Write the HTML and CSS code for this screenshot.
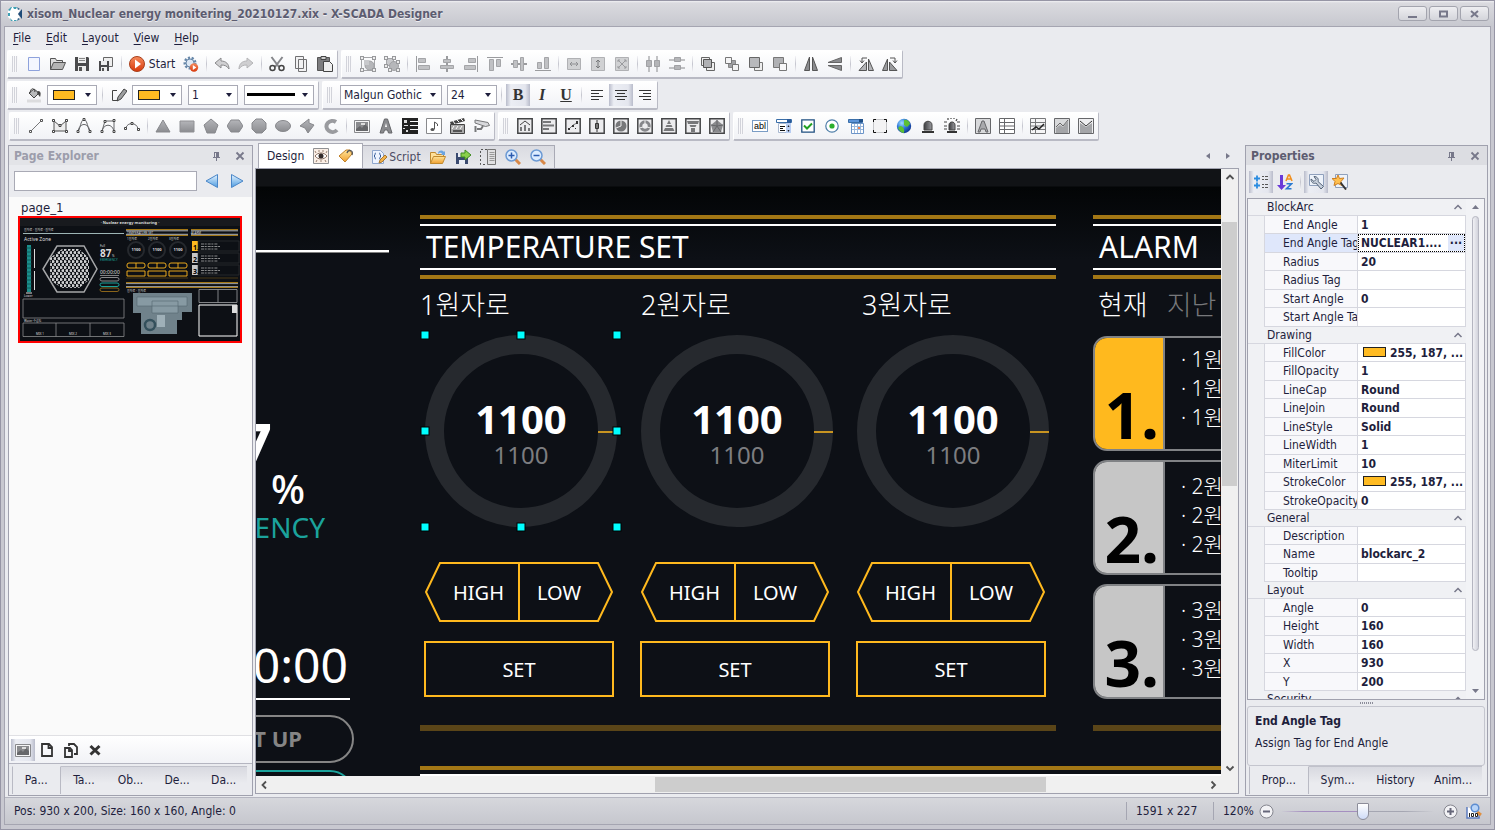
FILE: index.html
```
<!DOCTYPE html>
<html lang="en">
<head>
  <meta charset="UTF-8" />
  <meta name="viewport" content="width=device-width, initial-scale=1.0"/>
  <title>X-SCADA Designer</title>
  <link rel="stylesheet" href="styles.css">
</head>
<body>
  <!-- Icon sprite -->
  <svg class="sprite" width="0" height="0" aria-hidden="true">
    <defs>
      <linearGradient id="g-grey" x1="0" y1="0" x2="0" y2="1"><stop offset="0" stop-color="#b4b5b9"/><stop offset="1" stop-color="#8b8c90"/></linearGradient>
      <linearGradient id="g-blue" x1="0" y1="0" x2="0" y2="1"><stop offset="0" stop-color="#e6f4ff"/><stop offset="1" stop-color="#4d9be0"/></linearGradient>
      <linearGradient id="g-red" x1="0" y1="0" x2="0" y2="1"><stop offset="0" stop-color="#f58a5c"/><stop offset="1" stop-color="#d8390c"/></linearGradient>
      <linearGradient id="g-gold" x1="0" y1="0" x2="0" y2="1"><stop offset="0" stop-color="#ffe49a"/><stop offset="1" stop-color="#f0a030"/></linearGradient>
      <radialGradient id="g-globe" cx=".35" cy=".3" r=".8"><stop offset="0" stop-color="#9fe0ff"/><stop offset=".5" stop-color="#2a72d8"/><stop offset="1" stop-color="#0a2a80"/></radialGradient>
      <linearGradient id="g-line" x1="0" y1="0" x2="1" y2="0"><stop offset="0" stop-color="#3c3d40"/><stop offset="1" stop-color="#9a9b9f"/></linearGradient>
    </defs>
    <symbol id="i-logo" viewBox="0 0 16 16"><path d="M5 1h5l3 3-2 4 2 4-3 3H5l-4-4V5z" fill="#fff"/><path d="M1 4l3-3h1L3 5zM6 1h4l-1 2H7zM1 7h2v3H1zM3 12l3 3H4zM7 14h3l-1 1H7z" fill="#3fa0b4"/><path d="M15 3v10l-4-5z" fill="#1d4a78"/><path d="M10 1l3 2-2 1zM10 15l3-2-2-1z" fill="#2b5f86"/></symbol>
    <symbol id="i-new" viewBox="0 0 16 16"><path d="M2.500 1.500h11v13h-11z" fill="#f3f6ff" stroke="#8ea2dc"/></symbol>
    <symbol id="i-open" viewBox="0 0 16 16"><path d="M.5 13.500v-11h5l1 2h6v2" fill="#dedede" stroke="#555"/><path d="M.5 13.500l3-7h12l-3 7z" fill="#b5b5b5" stroke="#555"/></symbol>
    <symbol id="i-save" viewBox="0 0 16 16"><path d="M1 1h13l1 1v13H1z" fill="#4a4a4c"/><path d="M4 1h8v6H4zM4 10h8v5H4z" fill="#eee"/><path d="M5 2.500h6M5 4.500h6" stroke="#888"/><path d="M5 11h3v4H5z" fill="#555"/></symbol>
    <symbol id="i-saveall" viewBox="0 0 16 16"><path d="M5.500 1.500h9v9h-9z" fill="#eee" stroke="#666"/><path d="M1 5h10v10H1z" fill="#4a4a4c"/><path d="M3 5h6v4H3zM3 11h6v4H3z" fill="#eee"/><path d="M4 12h2v3H4z" fill="#555"/></symbol>
    <symbol id="i-start" viewBox="0 0 16 16"><circle cx="8" cy="8" r="7.500" fill="url(#g-red)" stroke="#a8401c"/><path d="M6 3.500l6 4.500-6 4.500z" fill="#fff"/></symbol>
    <symbol id="i-gear" viewBox="0 0 16 16"><circle cx="7" cy="7" r="5" fill="#dce8f4" stroke="#6787a8" stroke-width="3" stroke-dasharray="2 1.500"/><circle cx="7" cy="7" r="4" fill="#dce8f4" stroke="#6787a8"/><circle cx="11" cy="11.500" r="4.200" fill="url(#g-red)"/><path d="M9.800 9l3.500 2.500-3.500 2.500z" fill="#fff"/></symbol>
    <symbol id="i-undo" viewBox="0 0 16 16"><path d="M1 7l6-5v3c5 0 8 3 8 8-2-3-4-4-8-4v3z" fill="#d0d0d2" stroke="#8a8a8c"/></symbol>
    <symbol id="i-redo" viewBox="0 0 16 16"><path d="M15 7L9 2v3c-5 0-8 3-8 8 2-3 4-4 8-4v3z" fill="#cfcfd1" stroke="#b5b5b7"/></symbol>
    <symbol id="i-cut" viewBox="0 0 16 16"><path d="M2.500 1l7.500 10M13.500 1L6 11" stroke="#85868a" stroke-width="2"/><circle cx="3.500" cy="12" r="2.500" fill="none" stroke="#444" stroke-width="1.500"/><circle cx="12.500" cy="12" r="2.500" fill="none" stroke="#444" stroke-width="1.500"/></symbol>
    <symbol id="i-copy" viewBox="0 0 16 16"><path d="M2.500.5h8v12h-8zM5.500 3.500h8v12h-8z" fill="#f2f2f3" stroke="#707072"/></symbol>
    <symbol id="i-paste" viewBox="0 0 16 16"><path d="M.5 1.500h12v13H.5z" fill="#7d7d7f" stroke="#555"/><path d="M4 .5h5v3H4z" fill="#ccc" stroke="#444"/><path d="M6.500 5.500h6l3 3v7h-9z" fill="#eee" stroke="#444"/></symbol>
    <symbol id="i-group" viewBox="0 0 16 16"><path d="M1.500 1.500h13v13h-13z" fill="none" stroke="#a4a5a8"/><circle cx="9.500" cy="9.500" r="4.500" fill="#b6b7ba" stroke="#a0a1a4"/><path d="M4 4h5v5H4z" fill="#c8c9cc"/><path d="M0 0h4v4H0zM12 0h4v4h-4zM0 12h4v4H0zM12 12h4v4h-4z" fill="#98999c"/><path d="M1 1h2v2H1zM13 1h2v2h-2zM1 13h2v2H1zM13 13h2v2h-2z" fill="#eee"/></symbol>
    <symbol id="i-ungroup" viewBox="0 0 16 16"><path d="M2.500 2.500h7v7h-7z" fill="#c8c9cc" stroke="#a4a5a8"/><circle cx="10" cy="10" r="4.500" fill="#b6b7ba" stroke="#a0a1a4"/><path d="M0 0h4v4H0zM8 0h4v4H8zM0 8h4v4H0zM12 4h4v4h-4zM4 12h4v4H4zM12 12h4v4h-4z" fill="#98999c"/><path d="M1 1h2v2H1zM9 1h2v2H9zM1 9h2v2H1zM13 5h2v2h-2zM5 13h2v2H5zM13 13h2v2h-2z" fill="#eee"/></symbol>
    <symbol id="i-al" viewBox="0 0 16 16"><path d="M1.500 0v16" stroke="#9a9b9e"/><path d="M3.500 2.500h7v4h-7zM3.500 9.500h11v4h-11z" fill="#c0c1c4" stroke="#a4a5a8"/></symbol>
    <symbol id="i-ac" viewBox="0 0 16 16"><path d="M8 0v16" stroke="#9a9b9e" stroke-width="2"/><path d="M4.500 3.500h7v3h-7zM1.500 9.500h13v3h-13z" fill="#c0c1c4" stroke="#a4a5a8"/></symbol>
    <symbol id="i-ar" viewBox="0 0 16 16"><path d="M14.500 0v16" stroke="#9a9b9e"/><path d="M5.500 2.500h7v4h-7zM1.500 9.500h11v4h-11z" fill="#c0c1c4" stroke="#a4a5a8"/></symbol>
    <symbol id="i-at" viewBox="0 0 16 16"><path d="M0 1.500h16" stroke="#9a9b9e"/><path d="M2.500 3.500h4v11h-4zM9.500 3.500h4v7h-4z" fill="#c0c1c4" stroke="#a4a5a8"/></symbol>
    <symbol id="i-am" viewBox="0 0 16 16"><path d="M0 8h16" stroke="#9a9b9e" stroke-width="2"/><path d="M2.500 4.500h4v7h-4zM9.500 1.500h3v13h-3z" fill="#c0c1c4" stroke="#a4a5a8"/></symbol>
    <symbol id="i-ab" viewBox="0 0 16 16"><path d="M0 14.500h16" stroke="#9a9b9e"/><path d="M2.500 6.500h4v6h-4zM9.500 1.500h4v11h-4z" fill="#c0c1c4" stroke="#a4a5a8"/></symbol>
    <symbol id="i-sw" viewBox="0 0 16 16"><path d="M1.500 2.500h13v11h-13z" fill="#d0d1d3" stroke="#b0b1b4"/><path d="M4 8h8M6 6L4 8l2 2M10 6l2 2-2 2" fill="none" stroke="#8e8f92"/></symbol>
    <symbol id="i-sh" viewBox="0 0 16 16"><path d="M1.500 1.500h13v13h-13z" fill="#d0d1d3" stroke="#b0b1b4"/><path d="M8 4v8M6 6l2-2 2 2M6 10l2 2 2-2" fill="none" stroke="#77787a"/></symbol>
    <symbol id="i-sb" viewBox="0 0 16 16"><path d="M1.500 1.500h13v13h-13z" fill="#d0d1d3" stroke="#b0b1b4"/><path d="M4 4l8 8M12 4l-8 8M4 6V4h2M10 4h2v2M12 10v2h-2M6 12H4v-2" fill="none" stroke="#9a9b9e"/></symbol>
    <symbol id="i-dh" viewBox="0 0 16 16"><path d="M4 0v16M12 0v16" stroke="#88898c"/><path d="M1.500 4.500h5v6h-5zM9.500 4.500h5v6h-5z" fill="#b4b5b8" stroke="#a0a1a4"/></symbol>
    <symbol id="i-dv" viewBox="0 0 16 16"><path d="M0 4h16M0 12h16" stroke="#88898c"/><path d="M5.500 1.500h6v4h-6zM5.500 9.500h6v4h-6z" fill="#b4b5b8" stroke="#a0a1a4"/></symbol>
    <symbol id="i-z1" viewBox="0 0 16 16"><path d="M1.500 1.500h8v8h-8z" fill="#eee" stroke="#666"/><path d="M6.500 6.500h8v8h-8z" fill="#eee" stroke="#666"/><path d="M3.500 3.500h8v8h-8z" fill="#b0b1b4" stroke="#555"/></symbol>
    <symbol id="i-z2" viewBox="0 0 16 16"><path d="M4.500 4.500h7v7h-7z" fill="#a0a1a4" stroke="#888"/><path d="M1.500 1.500h6v6h-6zM8.500 8.500h6v6h-6z" fill="#f4f4f5" stroke="#777"/></symbol>
    <symbol id="i-z3" viewBox="0 0 16 16"><path d="M6.500 6.500h8v8h-8z" fill="#eee" stroke="#777"/><path d="M1.500 1.500h10v10h-10z" fill="#b8b9bc" stroke="#666"/></symbol>
    <symbol id="i-z4" viewBox="0 0 16 16"><path d="M1.500 1.500h10v10h-10z" fill="#b0b1b4" stroke="#777"/><path d="M7.500 7.500h7v7h-7z" fill="#f8f8f9" stroke="#777"/></symbol>
    <symbol id="i-fh" viewBox="0 0 16 16"><path d="M6.500 1v13.500h-5zM9.500 1v13.500h5z" fill="#8b8c8f" stroke="#555"/></symbol>
    <symbol id="i-fv" viewBox="0 0 16 16"><path d="M1 6.500h13.500v-5zM1 9.500h13.500v5z" fill="#8b8c8f" stroke="#666"/></symbol>
    <symbol id="i-rl" viewBox="0 0 16 16"><path d="M10.500 3v11.500h5zM1 14.500h7.500V6z" fill="#b4b5b8" stroke="#555"/><path d="M9 2H4v5M2 4.500L4 7l2-2.500" fill="none" stroke="#555"/></symbol>
    <symbol id="i-rr" viewBox="0 0 16 16"><path d="M5.500 3v11.500h-5zM7.500 6v8.500H15z" fill="#9a9b9e" stroke="#555"/><path d="M8 2h5v5M11 4.500L13 7l2-2.500" fill="none" stroke="#555"/></symbol>
    <symbol id="i-fill" viewBox="0 0 16 16"><path d="M3 6l5-4 5 4-5 5z" fill="#b8b9bb" stroke="#444"/><path d="M4 6c1-6 4-5 5-1" fill="none" stroke="#444"/><path d="M12 4c3 0 3 3 2 6l-3-4z" fill="#444"/><path d="M1 14h14" stroke="#dcdcde" stroke-width="3"/></symbol>
    <symbol id="i-pen" viewBox="0 0 16 16"><path d="M6 3.500H1.500v10H7" fill="none" stroke="#444"/><path d="M7 10l6-8 3 2-6 8-4 2z" fill="#9d9ea0" stroke="#444"/></symbol>
    <symbol id="i-left" viewBox="0 0 16 16"><path d="M2 3.500h12M2 6.500h8M2 9.500h12M2 12.500h8" stroke="#333"/></symbol>
    <symbol id="i-center" viewBox="0 0 16 16"><path d="M2 3.500h12M4 6.500h8M2 9.500h12M4 12.500h8" stroke="#333"/></symbol>
    <symbol id="i-right" viewBox="0 0 16 16"><path d="M2 3.500h12M6 6.500h8M2 9.500h12M6 12.500h8" stroke="#333"/></symbol>
    <symbol id="i-line" viewBox="0 0 16 16"><path d="M3 13L13 3" stroke="#77787a"/><path d="M1.500 12.500h2v2h-2zM12.500 1.500h2v2h-2z" fill="#fff" stroke="#555"/></symbol>
    <symbol id="i-poly" viewBox="0 0 16 16"><path d="M2 13V3l6 5 6-5v10z" fill="#eee" stroke="#555"/><path d="M.5 1.500h2v2h-2zM13.500 1.500h2v2h-2zM.5 12.500h2v2h-2zM13.500 12.500h2v2h-2zM7 6.500h2v2H7z" fill="#fff" stroke="#444"/></symbol>
    <symbol id="i-curve" viewBox="0 0 16 16"><path d="M2 14C3 4 13 4 14 14M3 12C5 6 5 3 8 1c3 2 3 5 5 11" fill="none" stroke="#66676a"/><path d="M1 12.500h2v2H1zM13 12.500h2v2h-2zM7 .5h2v2H7z" fill="#fff" stroke="#444"/></symbol>
    <symbol id="i-bezier" viewBox="0 0 16 16"><path d="M2 14C3 5 13 5 14 14M2 13l3-10h9v10" fill="none" stroke="#66676a"/><path d="M1 12.500h2v2H1zM13 12.500h2v2h-2zM4 2.500h2v2H4zM13 1.500h2v2h-2z" fill="#fff" stroke="#444"/></symbol>
    <symbol id="i-arcp" viewBox="0 0 16 16"><path d="M2 10C3 4 13 4 14 11" fill="none" stroke="#66676a"/><path d="M.5 9.500h2v2h-2zM13.500 10.500h2v2h-2zM7 4.500h2v2H7z" fill="#fff" stroke="#444"/></symbol>
    <symbol id="i-tri" viewBox="0 0 16 16"><path d="M8 2l7 12H1z" fill="url(#g-grey)" stroke="#87888c"/></symbol>
    <symbol id="i-rect" viewBox="0 0 16 16"><path d="M1 3h14v11H1z" fill="url(#g-grey)" stroke="#8f9094"/></symbol>
    <symbol id="i-penta" viewBox="0 0 16 16"><path d="M8 1l7 6-3 8H4L1 7z" fill="url(#g-grey)" stroke="#87888c"/></symbol>
    <symbol id="i-hexa" viewBox="0 0 16 16"><path d="M4 2h8l4 6-4 6H4L0 8z" fill="url(#g-grey)" stroke="#87888c"/></symbol>
    <symbol id="i-octa" viewBox="0 0 16 16"><path d="M5 1h6l4 4v6l-4 4H5l-4-4V5z" fill="url(#g-grey)" stroke="#87888c"/></symbol>
    <symbol id="i-ell" viewBox="0 0 16 16"><ellipse cx="8" cy="8" rx="7.500" ry="5.500" fill="url(#g-grey)" stroke="#87888c"/></symbol>
    <symbol id="i-pie" viewBox="0 0 16 16"><path d="M10 1v4l5 2-6 8-3-5-5-2z" fill="url(#g-grey)" stroke="#87888c"/></symbol>
    <symbol id="i-carc" viewBox="0 0 16 16"><path d="M13 4a6 5.500 0 1 0 1 8" fill="none" stroke="#9a9b9f" stroke-width="4"/></symbol>
    <symbol id="i-img" viewBox="0 0 16 16"><path d="M.5 2.500h15v12H.5z" fill="#f5f5f6" stroke="#88898c"/><path d="M2 4h12v9H2z" fill="#8a8b8e"/><path d="M2 11l4-3 2 2 3-4 3 3v4H2z" fill="#66676a"/><path d="M7 5h4v2H7z" fill="#ddd"/></symbol>
    <symbol id="i-a" viewBox="0 0 16 16"><path d="M2 15L6.500 1h3L14 15h-3.500l-1-3h-3l-1 3z" fill="#8a8b8e" stroke="#66676a"/><path d="M8 5l1 4H7z" fill="#fff"/></symbol>
    <symbol id="i-qr" viewBox="0 0 16 16"><path d="M0 0h8v16H0zM8 0h8v3H8zM8 4h8v3H8zM8 8h8v3H8zM8 12h8v4H8z" fill="#222"/><path d="M2 2h3v3H2zM2 7h4v1H2zM1 10h2v1H1zM4 12h2v2H4z" fill="#ddd"/></symbol>
    <symbol id="i-music" viewBox="0 0 16 16"><path d="M.5.5h15v15H.5z" fill="#fff" stroke="#88898c"/><ellipse cx="6.500" cy="11.500" rx="2" ry="1.500" fill="#555"/><path d="M8.500 11V4l3 2v2" fill="none" stroke="#555"/></symbol>
    <symbol id="i-clap" viewBox="0 0 16 16"><path d="M.5 6.500h14v9H.5z" fill="#aaa" stroke="#444"/><path d="M0 4l14-4 1 3-14 4z" fill="#444"/><path d="M3 3l2 3M7 2l2 2M11 1l2 2M4 8l-2 3M8 8l-2 3M12 8l-2 3" stroke="#fff"/><path d="M3 12h9v2H3z" fill="#555"/></symbol>
    <symbol id="i-cam" viewBox="0 0 16 16"><path d="M1 2l13 2.500 1.500 3-4 1L1 5z" fill="#d8d9dc" stroke="#77787a"/><path d="M9 8l-2 3H3M1.500 8v6" fill="none" stroke="#77787a" stroke-width="2"/></symbol>
    <symbol id="i-frame" viewBox="0 0 16 16"><path d="M.8.8h14.400v14.400H.8z" fill="#ececee" stroke="#444547" stroke-width="1.500"/></symbol>
    <symbol id="i-c1" viewBox="0 0 16 16"><use href="#i-frame"/><path d="M3 7l5-4 5 4" fill="none" stroke="#444"/><path d="M3 9h2v4H3zM7 7h2v6H7zM11 10h2v3h-2z" fill="#77787a"/></symbol>
    <symbol id="i-c2" viewBox="0 0 16 16"><use href="#i-frame"/><path d="M2 4h8M2 7.500h11M2 11h6" stroke="#77787a" stroke-width="2"/></symbol>
    <symbol id="i-c3" viewBox="0 0 16 16"><use href="#i-frame"/><path d="M4 11l4-4 4-2" fill="none" stroke="#77787a"/><path d="M3 10h2v2H3zM7 7h2v2H7zM11 3h2v3h-2zM10 10h1v1h-1z" fill="#333"/></symbol>
    <symbol id="i-c4" viewBox="0 0 16 16"><use href="#i-frame"/><path d="M8 2v12M6.500 5.500h3v5h-3z" fill="#bbb" stroke="#333"/></symbol>
    <symbol id="i-c5" viewBox="0 0 16 16"><use href="#i-frame"/><circle cx="8" cy="8" r="5.500" fill="#77787a"/><path d="M8 8V2M8 8l-5 2" stroke="#eee"/></symbol>
    <symbol id="i-c6" viewBox="0 0 16 16"><use href="#i-frame"/><circle cx="8" cy="8" r="4.200" fill="none" stroke="#85868a" stroke-width="3"/><path d="M8 2v4M2.500 10L6 9M13.500 10L10 9" stroke="#eee"/></symbol>
    <symbol id="i-c7" viewBox="0 0 16 16"><use href="#i-frame"/><path d="M8 2l2 4H6zM5.500 7h5l1 2h-7zM4 10h8l1.500 3h-11z" fill="#77787a"/></symbol>
    <symbol id="i-c8" viewBox="0 0 16 16"><use href="#i-frame"/><path d="M2 3h12l-1 3H3zM4.500 7h7l-1 2h-5zM6 10h4v4H6z" fill="#77787a"/></symbol>
    <symbol id="i-c9" viewBox="0 0 16 16"><use href="#i-frame"/><path d="M8 2l6 5-2 7H4L2 7z" fill="#8a8b8e"/><path d="M8 2v6l6-1M8 8l4 6M8 8l-4 6M8 8L2 7" fill="none" stroke="#66676a"/></symbol>
    <symbol id="i-drop" viewBox="0 0 16 16"><path d="M.5 1.500h15v3H.5z" fill="#fff" stroke="#3a6ea8"/><path d="M11 1h4v4h-4z" fill="#2a5a98"/><path d="M2.500 5.500h12v9h-12z" fill="#fff" stroke="#a8b8d0"/><path d="M10 5h5v10h-5z" fill="#b8cdf2"/><path d="M4 8.500h5M4 10.500h3M4 12.500h5" stroke="#111"/><path d="M12.500 7l1 2h-2zM12.500 14l1-2h-2z" fill="#222"/></symbol>
    <symbol id="i-check" viewBox="0 0 16 16"><path d="M1.800 1.800h12.400v12.400H1.800z" fill="#fff" stroke="#1f4f80" stroke-width="1.300"/><path d="M4 7.500l3 3 5-5" fill="none" stroke="#22a022" stroke-width="2"/></symbol>
    <symbol id="i-radio" viewBox="0 0 16 16"><circle cx="8" cy="8" r="6.200" fill="#fff" stroke="#4d7da8" stroke-width="1.200"/><circle cx="8" cy="8" r="2.600" fill="#2cae2c"/></symbol>
    <symbol id="i-cal" viewBox="0 0 16 16"><path d="M.5 1.500h14v3H.5z" fill="#5c93d8" stroke="#3a6ea8"/><path d="M11 1h4v3h-4z" fill="#1f4f88"/><path d="M3.500 5.500h12v10h-12z" fill="#fff" stroke="#6c94c8"/><path d="M4 8.500h11M4 11.500h11M6.500 6v9M9.500 6v9M12.500 6v9" stroke="#9cb8dc"/><path d="M10 9h2v2h-2z" fill="#f08050"/></symbol>
    <symbol id="i-panel" viewBox="0 0 16 16"><path d="M1.500 1.500h13v13h-13z" fill="#f3f3f4" stroke="#c4c5c8"/><path d="M1.500 4V1.500H4M12 1.500h2.500V4M14.500 12v2.500H12M4 14.500H1.500V12" fill="none" stroke="#111"/></symbol>
    <symbol id="i-globe" viewBox="0 0 16 16"><circle cx="8" cy="8" r="7.200" fill="url(#g-globe)"/><path d="M8 2c3-1 6 2 6 4l-3 3-3-2zM4 8c3 0 5 3 4 7-3 0-5-3-6-5z" fill="#5cc034"/></symbol>
    <symbol id="i-alarm" viewBox="0 0 16 16"><path d="M4 12V7c0-5 8-5 8 0v5z" fill="url(#g-line)" stroke="#444"/><path d="M2 13h12v2H2z" fill="#333"/></symbol>
    <symbol id="i-alarm2" viewBox="0 0 16 16"><path d="M5 12V7c0-4 6-4 6 0v5z" fill="url(#g-line)" stroke="#444"/><path d="M3 13h10v2H3z" fill="#333"/><path d="M4 0v2M7 0v1M10 0v1M13 1l-1 2M0 4h3M13 4h3M0 8h3M13 8h3M0 11h3M13 11h3" stroke="#444" stroke-width="1.200"/></symbol>
    <symbol id="i-abox" viewBox="0 0 16 16"><path d="M.5.5h15v15H.5z" fill="#d8d9db" stroke="#66676a"/><path d="M3 14L7 3h2l4 11h-2l-1-3H6l-1 3z" fill="#a8a9ac" stroke="#66676a"/></symbol>
    <symbol id="i-table" viewBox="0 0 16 16"><path d="M.5.5h15v15H.5zM.5 4.500h15M.5 8h15M.5 11.500h15M5.500 1v14" fill="#fff" stroke="#66676a"/></symbol>
    <symbol id="i-g1" viewBox="0 0 16 16"><path d="M.5.5h15v15H.5zM.5 4.500h15M.5 8h15M.5 11.500h15M5.500 1v14" fill="#f5f5f6" stroke="#77787a"/><path d="M2 12l4-3 3 2 5-5" fill="none" stroke="#222" stroke-width="1.500"/></symbol>
    <symbol id="i-g2" viewBox="0 0 16 16"><path d="M.5.5h15v15H.5z" fill="#d8d9db" stroke="#66676a"/><path d="M2 15v-5l4-3 3 2 5-6v12z" fill="#a4a5a8"/><path d="M2 9l4-4 3 3 5-6" fill="none" stroke="#666"/></symbol>
    <symbol id="i-g3" viewBox="0 0 16 16"><path d="M.5.5h15v15H.5z" fill="#eeeef0" stroke="#66676a"/><path d="M2 15V5l6 4 6-4v10z" fill="#a4a5a8"/><path d="M2 3l6 5 6-5" fill="none" stroke="#333"/></symbol>
    <symbol id="i-eye" viewBox="0 0 16 16"><path d="M.5.5h15v15H.5z" fill="#fbefe6" stroke="#909194"/><path d="M2 8c3-4 9-4 12 0-3 4-9 4-12 0z" fill="#fff" stroke="#886e60"/><circle cx="8" cy="8" r="2.500" fill="#332a28"/><path d="M3 5L2 3M6 4V2M10 4V2M13 5l1-2M4 12l-1 2M8 12v2M12 12l1 2" stroke="#998272"/></symbol>
    <symbol id="i-tag" viewBox="0 0 16 16"><path d="M1 8l7-6h4l2 4-7 8z" fill="url(#g-gold)" stroke="#c08028"/><path d="M9 5c1-4 7-3 5 2" fill="none" stroke="#555" stroke-width="1.300"/></symbol>
    <symbol id="i-script" viewBox="0 0 16 16"><path d="M1.500 1.500h8l3 3v10h-11z" fill="#edf3ff" stroke="#8fa6cc"/><path d="M5 4c-1 0-1 1-1 2l-1 1 1 1c0 1 0 2 1 2M8 4c1 0 1 1 1 2l1 1-1 1c0 1 0 2-1 2" fill="none" stroke="#335a98"/><path d="M8 14l1-3 5-5 2 2-5 5z" fill="#f2b24a" stroke="#a87830"/></symbol>
    <symbol id="i-import" viewBox="0 0 16 16"><path d="M.5 14.500v-11h5l1 2h7v3" fill="#ffe09a" stroke="#c08a30"/><path d="M.5 14.500l3-7h12l-3 7z" fill="url(#g-gold)" stroke="#c08a30"/><path d="M8 4c1-3 4-3 6-1l1-1v4h-4l1-1c-1-2-3-1-4 0z" fill="#6aa4e0"/></symbol>
    <symbol id="i-export" viewBox="0 0 16 16"><path d="M1 4h12v11H1z" fill="#3a4a70"/><path d="M3 4h6v4H3zM4 11h6v4H4z" fill="#e8ecf4"/><path d="M6 4h4V1l6 5-6 5V8H6z" fill="#8ad04a" stroke="#3c8a20"/></symbol>
    <symbol id="i-side" viewBox="0 0 16 16"><path d="M7 .5H.5v15H7" fill="none" stroke="#555" stroke-dasharray="2 2"/><path d="M7.500.5h8v15h-8z" fill="#e0e0e2" stroke="#777"/><path d="M9.500 3.500h5M9.500 5.500h5M9.500 7.500h5M9.500 9.500h5M9.500 11.500h5" stroke="#999"/></symbol>
    <symbol id="i-zin" viewBox="0 0 16 16"><path d="M10 10l5 5" stroke="#d88848" stroke-width="3"/><circle cx="6.500" cy="6.500" r="5.500" fill="#dcecff" stroke="#6c9ad4" stroke-width="1.500"/><path d="M6.500 3.500v6M3.500 6.500h6" stroke="#2c5cb0" stroke-width="1.500"/></symbol>
    <symbol id="i-zout" viewBox="0 0 16 16"><path d="M10 10l5 5" stroke="#d88848" stroke-width="3"/><circle cx="6.500" cy="6.500" r="5.500" fill="#dcecff" stroke="#6c9ad4" stroke-width="1.500"/><path d="M3.500 6.500h6" stroke="#2c5cb0" stroke-width="1.500"/></symbol>
    <symbol id="i-pin" viewBox="0 0 16 16"><path d="M5.500 4v5M5 4.500h5M4 9.500h7M7.500 10v3" fill="none" stroke="#77788a"/><path d="M7 4h3v5H7z" fill="#77788a"/></symbol>
    <symbol id="i-x" viewBox="0 0 16 16"><path d="M4.500 4.500l7 7M11.500 4.500l-7 7" stroke="#77788a" stroke-width="1.800"/></symbol>
    <symbol id="i-prev" viewBox="0 0 16 16"><path d="M13.500 1.500v13L2 8z" fill="url(#g-blue)" stroke="#4a86c8"/></symbol>
    <symbol id="i-next" viewBox="0 0 16 16"><path d="M2.500 1.500v13L14 8z" fill="url(#g-blue)" stroke="#4a86c8"/></symbol>
    <symbol id="i-page" viewBox="0 0 16 16"><path d="M3 2h7l3 3v9H3zM9.500 2v4H13" fill="none" stroke="#333" stroke-width="1.800"/></symbol>
    <symbol id="i-pages" viewBox="0 0 16 16"><path d="M2 6h5l2 2v7H2zM6 4V2h5l3 3v7h-3M6 6v3h3" fill="none" stroke="#333" stroke-width="1.800"/></symbol>
    <symbol id="i-del" viewBox="0 0 16 16"><path d="M3.500 4l9 8.500M12.500 4l-9 8.500" stroke="#333" stroke-width="3"/></symbol>
    <symbol id="i-cat" viewBox="0 0 16 16"><path d="M1 4.500h6M4 1.500v6M1 11.500h6M4 8.500v6" stroke="#2b8ce0" stroke-width="1.800"/><path d="M9 2.500h2M12 2.500h3M9 5.500h2M12 5.500h3M9 10.500h2M12 10.500h3M9 13.500h2M12 13.500h3" stroke="#555"/></symbol>
    <symbol id="i-az" viewBox="0 0 16 16"><path d="M3 1h3v10h3l-4.500 5L0 11h3z" fill="#6a3ad8"/><path d="M9 7l2.500-6h1L15 7M10 5h4" fill="none" stroke="#f09020" stroke-width="1.600"/><path d="M9.500 9.800h5l-5 5h5" fill="none" stroke="#2b7ad0" stroke-width="1.600"/></symbol>
    <symbol id="i-wrench" viewBox="0 0 16 16"><path d="M1.500.5h14v11h-14z" fill="#edf2fa" stroke="#8fa0bc"/><path d="M3 5c0 4 3 5 5 4l5 6 2.500-2.500-5.500-5c1-3-1-5-4-5l2 3-2 2z" fill="#c8d0dc" stroke="#556478"/></symbol>
    <symbol id="i-event" viewBox="0 0 16 16"><path d="M3.500.5h12v13h-12z" fill="#edf2fa" stroke="#8fa0bc"/><path d="M6 1l1.500 3.500L12 4 9 7.500l1 4-4-2-4 2 1-4-3-3 4.500 0z" fill="#ffc050" stroke="#d08020"/><path d="M8.500 8.500l5.500 7" stroke="#333" stroke-width="2"/></symbol>
    <symbol id="i-zoom100" viewBox="0 0 16 16"><path d="M1 4v11h12V9" fill="#fff" stroke="#5c7cc0" stroke-width="1.500"/><path d="M11 9l4 3" stroke="#e09040" stroke-width="3"/><circle cx="9" cy="5" r="3.800" fill="#b8d4f8" stroke="#5c8cd0" stroke-width="1.500"/><path d="M3.500 10v4M5.500 10.500h2v3h-2zM9.500 10.500h2v3h-2z" fill="none" stroke="#222"/></symbol>
    <symbol id="i-up" viewBox="0 0 16 16"><path d="M4.500 10L8 6.500l3.500 3.500" fill="none" stroke="#77788a" stroke-width="1.500"/></symbol>
  </svg>

  <div class="window">
    <header class="titlebar">
      <svg class="ico"><use href="#i-logo"/></svg>
      <h1>xisom_Nuclear energy monitering_20210127.xix - X-SCADA Designer</h1>
      <div class="win-buttons">
        <button type="button" aria-label="Minimize"><svg width="9" height="8"><path d="M0 6h9v2H0z" fill="#77788a"/></svg></button>
        <button type="button" aria-label="Maximize"><svg width="9" height="8"><path d="M1 1.500h7v5H1z" fill="none" stroke="#77788a" stroke-width="2"/></svg></button>
        <button type="button" aria-label="Close"><svg width="9" height="8"><path d="M1 1l7 6M8 1L1 7" stroke="#77788a" stroke-width="2"/></svg></button>
      </div>
    </header>

    <div class="client">
      <nav class="menubar">
        <a href="#"><u>F</u>ile</a>
        <a href="#"><u>E</u>dit</a>
        <a href="#"><u>L</u>ayout</a>
        <a href="#"><u>V</u>iew</a>
        <a href="#"><u>H</u>elp</a>
      </nav>

      <div class="toolbars">
        <div class="toolbar-row">
          <div class="toolbar">
            <button type="button" title="New"><svg class="ico"><use href="#i-new"/></svg></button>
            <button type="button" title="Open"><svg class="ico"><use href="#i-open"/></svg></button>
            <button type="button" title="Save"><svg class="ico"><use href="#i-save"/></svg></button>
            <button type="button" title="Save all"><svg class="ico"><use href="#i-saveall"/></svg></button>
            <i class="sep"></i>
            <button type="button" class="start"><svg class="ico"><use href="#i-start"/></svg>Start</button>
            <button type="button" title="Settings"><svg class="ico"><use href="#i-gear"/></svg></button>
            <i class="sep"></i>
            <button type="button" title="Undo"><svg class="ico"><use href="#i-undo"/></svg></button>
            <button type="button" title="Redo"><svg class="ico"><use href="#i-redo"/></svg></button>
            <i class="sep"></i>
            <button type="button" title="Cut"><svg class="ico"><use href="#i-cut"/></svg></button>
            <button type="button" title="Copy"><svg class="ico"><use href="#i-copy"/></svg></button>
            <button type="button" title="Paste"><svg class="ico"><use href="#i-paste"/></svg></button>
          </div>
          <div class="toolbar">
            <button type="button" title="Group"><svg class="ico"><use href="#i-group"/></svg></button>
            <button type="button" title="Ungroup"><svg class="ico"><use href="#i-ungroup"/></svg></button>
            <i class="sep"></i>
            <button type="button" title="Align left"><svg class="ico"><use href="#i-al"/></svg></button>
            <button type="button" title="Align center"><svg class="ico"><use href="#i-ac"/></svg></button>
            <button type="button" title="Align right"><svg class="ico"><use href="#i-ar"/></svg></button>
            <button type="button" title="Align top"><svg class="ico"><use href="#i-at"/></svg></button>
            <button type="button" title="Align middle"><svg class="ico"><use href="#i-am"/></svg></button>
            <button type="button" title="Align bottom"><svg class="ico"><use href="#i-ab"/></svg></button>
            <i class="sep"></i>
            <button type="button" title="Same width"><svg class="ico"><use href="#i-sw"/></svg></button>
            <button type="button" title="Same height"><svg class="ico"><use href="#i-sh"/></svg></button>
            <button type="button" title="Same size"><svg class="ico"><use href="#i-sb"/></svg></button>
            <i class="sep"></i>
            <button type="button" title="Distribute horizontally"><svg class="ico"><use href="#i-dh"/></svg></button>
            <button type="button" title="Distribute vertically"><svg class="ico"><use href="#i-dv"/></svg></button>
            <i class="sep"></i>
            <button type="button" title="Bring to front"><svg class="ico"><use href="#i-z1"/></svg></button>
            <button type="button" title="Send to back"><svg class="ico"><use href="#i-z2"/></svg></button>
            <button type="button" title="Bring forward"><svg class="ico"><use href="#i-z3"/></svg></button>
            <button type="button" title="Send backward"><svg class="ico"><use href="#i-z4"/></svg></button>
            <i class="sep"></i>
            <button type="button" title="Flip horizontal"><svg class="ico"><use href="#i-fh"/></svg></button>
            <button type="button" title="Flip vertical"><svg class="ico"><use href="#i-fv"/></svg></button>
            <i class="sep"></i>
            <button type="button" title="Rotate left"><svg class="ico"><use href="#i-rl"/></svg></button>
            <button type="button" title="Rotate right"><svg class="ico"><use href="#i-rr"/></svg></button>
          </div>
        </div>

        <div class="toolbar-row">
          <div class="toolbar">
            <button type="button" title="Fill"><svg class="ico"><use href="#i-fill"/></svg></button>
            <label class="combo swatch-combo"><select aria-label="Fill color"><option></option></select><span class="swatch"></span></label>
            <i class="sep wide"></i>
            <button type="button" title="Stroke"><svg class="ico"><use href="#i-pen"/></svg></button>
            <label class="combo swatch-combo"><select aria-label="Stroke color"><option></option></select><span class="swatch"></span></label>
            <label class="combo size-combo spaced"><select aria-label="Line width"><option>1</option></select></label>
            <label class="combo line-combo"><select aria-label="Line style"><option></option></select><span class="stroke"></span></label>
          </div>
          <div class="toolbar">
            <label class="combo font-combo"><select aria-label="Font"><option>Malgun Gothic</option></select></label>
            <label class="combo size-combo spaced"><select aria-label="Font size"><option>24</option></select></label>
            <i class="sep wide"></i>
            <button type="button" class="letter active"><b>B</b></button>
            <button type="button" class="letter"><em>I</em></button>
            <button type="button" class="letter"><u>U</u></button>
            <i class="sep"></i>
            <button type="button" title="Left"><svg class="ico"><use href="#i-left"/></svg></button>
            <button type="button" title="Center" class="active"><svg class="ico"><use href="#i-center"/></svg></button>
            <button type="button" title="Right"><svg class="ico"><use href="#i-right"/></svg></button>
          </div>
        </div>

        <div class="toolbar-row shapes">
          <div class="toolbar">
            <button type="button" title="Line"><svg class="ico"><use href="#i-line"/></svg></button>
            <button type="button" title="Polyline"><svg class="ico"><use href="#i-poly"/></svg></button>
            <button type="button" title="Curve"><svg class="ico"><use href="#i-curve"/></svg></button>
            <button type="button" title="Bezier"><svg class="ico"><use href="#i-bezier"/></svg></button>
            <button type="button" title="Arc"><svg class="ico"><use href="#i-arcp"/></svg></button>
            <i class="sep"></i>
            <button type="button" title="Triangle"><svg class="ico"><use href="#i-tri"/></svg></button>
            <button type="button" title="Rectangle"><svg class="ico"><use href="#i-rect"/></svg></button>
            <button type="button" title="Pentagon"><svg class="ico"><use href="#i-penta"/></svg></button>
            <button type="button" title="Hexagon"><svg class="ico"><use href="#i-hexa"/></svg></button>
            <button type="button" title="Octagon"><svg class="ico"><use href="#i-octa"/></svg></button>
            <button type="button" title="Ellipse"><svg class="ico"><use href="#i-ell"/></svg></button>
            <button type="button" title="Pie"><svg class="ico"><use href="#i-pie"/></svg></button>
            <button type="button" title="Block arc"><svg class="ico"><use href="#i-carc"/></svg></button>
            <i class="sep"></i>
            <button type="button" title="Image"><svg class="ico"><use href="#i-img"/></svg></button>
            <button type="button" title="Text"><svg class="ico"><use href="#i-a"/></svg></button>
            <button type="button" title="QR code"><svg class="ico"><use href="#i-qr"/></svg></button>
            <button type="button" title="Sound"><svg class="ico"><use href="#i-music"/></svg></button>
            <button type="button" title="Video"><svg class="ico"><use href="#i-clap"/></svg></button>
            <button type="button" title="Camera"><svg class="ico"><use href="#i-cam"/></svg></button>
          </div>
          <div class="toolbar">
            <button type="button" title="Bar chart"><svg class="ico"><use href="#i-c1"/></svg></button>
            <button type="button" title="Horizontal bars"><svg class="ico"><use href="#i-c2"/></svg></button>
            <button type="button" title="Scatter"><svg class="ico"><use href="#i-c3"/></svg></button>
            <button type="button" title="Box plot"><svg class="ico"><use href="#i-c4"/></svg></button>
            <button type="button" title="Pie chart"><svg class="ico"><use href="#i-c5"/></svg></button>
            <button type="button" title="Doughnut"><svg class="ico"><use href="#i-c6"/></svg></button>
            <button type="button" title="Pyramid"><svg class="ico"><use href="#i-c7"/></svg></button>
            <button type="button" title="Funnel"><svg class="ico"><use href="#i-c8"/></svg></button>
            <button type="button" title="Radar"><svg class="ico"><use href="#i-c9"/></svg></button>
          </div>
          <div class="toolbar">
            <button type="button" title="Text box"><span class="abl">abl</span></button>
            <button type="button" title="Combo box"><svg class="ico"><use href="#i-drop"/></svg></button>
            <button type="button" title="Check box"><svg class="ico"><use href="#i-check"/></svg></button>
            <button type="button" title="Radio button"><svg class="ico"><use href="#i-radio"/></svg></button>
            <button type="button" title="Date picker"><svg class="ico"><use href="#i-cal"/></svg></button>
            <button type="button" title="Panel"><svg class="ico"><use href="#i-panel"/></svg></button>
            <button type="button" title="Web view"><svg class="ico"><use href="#i-globe"/></svg></button>
            <button type="button" title="Alarm"><svg class="ico"><use href="#i-alarm"/></svg></button>
            <button type="button" title="Alarm list"><svg class="ico"><use href="#i-alarm2"/></svg></button>
            <i class="sep"></i>
            <button type="button" title="Label"><svg class="ico"><use href="#i-abox"/></svg></button>
            <button type="button" title="Table"><svg class="ico"><use href="#i-table"/></svg></button>
            <i class="sep"></i>
            <button type="button" title="Trend table"><svg class="ico"><use href="#i-g1"/></svg></button>
            <button type="button" title="Trend"><svg class="ico"><use href="#i-g2"/></svg></button>
            <button type="button" title="Report"><svg class="ico"><use href="#i-g3"/></svg></button>
          </div>
        </div>
      </div>

      <main class="work">
        <!-- Page Explorer -->
        <aside class="panel explorer">
          <div class="panel-head inactive">
            <h2>Page Explorer</h2>
            <button type="button" aria-label="Pin"><svg class="ico"><use href="#i-pin"/></svg></button>
            <button type="button" aria-label="Close"><svg class="ico"><use href="#i-x"/></svg></button>
          </div>
          <div class="search">
            <input type="text" aria-label="Search pages">
            <button type="button" aria-label="Previous"><svg class="ico"><use href="#i-prev"/></svg></button>
            <button type="button" aria-label="Next"><svg class="ico"><use href="#i-next"/></svg></button>
          </div>
          <div class="pages">
            <span class="page-name">page_1</span>
            <svg class="thumb" viewBox="0 0 220 123">
              <defs>
                <pattern id="p-dots" width="4" height="6" patternUnits="userSpaceOnUse"><circle cx="1" cy="1.500" r="1.500" fill="#d0d1d2"/><circle cx="3" cy="4.500" r="1.500" fill="#d0d1d2"/></pattern>
              </defs>
              <rect width="220" height="123" fill="#0d1015"/>
              <rect width="220" height="8" fill="#181a1e"/>
              <text x="110" y="6" class="t-title">· Nuclear energy monitoring ·</text>
              <text x="4" y="13" class="t-mini">원자로 · 원자로 · 원자로</text>
              <path d="M3 15.500h101" stroke="#9db5b5"/>
              <text x="4" y="23" class="t-head">Active Zone</text>
              <path d="M7 27h4v47H7z" fill="#1b8f8c"/>
              <path d="M6.500 30h5M6.500 34h5M6.500 38h5M6.500 42h5M6.500 46h5M6.500 50h5M6.500 54h5M6.500 58h5M6.500 62h5M6.500 66h5M6.500 70h5" stroke="#0f5a59"/>
              <path d="M6 75h6M14.500 31v19M14.500 53v19" stroke="#ddd"/>
              <path d="M37 28h27l13 23-13 23H37L23 51z" fill="none" stroke="#a5a6a8" stroke-width="1.500"/>
              <path d="M42 31h17l10 9v22l-10 8H42l-12-8V40z" fill="url(#p-dots)"/>
              <text x="80" y="29" class="t-mini">Full</text>
              <text x="80" y="39" class="t-num">87</text><text x="92" y="39" class="t-mini">%</text>
              <text x="80" y="43" class="t-mini teal">EMERGENCY</text>
              <text x="80" y="56" class="t-clock">00:00:00</text>
              <path d="M80 57.500h19" stroke="#ccc" stroke-width=".6"/>
              <rect x="80" y="59.500" width="19" height="3.500" rx="2" fill="none" stroke="#8a8a8c"/>
              <rect x="80" y="65" width="19" height="3.500" rx="2" fill="none" stroke="#1ba39c"/>
              <rect x="80" y="70" width="19" height="3.500" rx="2" fill="none" stroke="#8a641a"/>
              <path d="M106 11.500h62M106 17.500h62M171 11.500h47M171 17.500h47" stroke="#a37715"/>
              <path d="M106 12.800h62M106 16.300h62M171 12.800h47M171 16.300h47" stroke="#fff" stroke-width=".7"/>
              <text x="107" y="15.800" class="t-mini">TEMPERATURE SET</text><text x="171" y="15.800" class="t-mini">ALARM</text>
              <text x="107" y="21.500" class="t-mini">1원자로</text><text x="128" y="21.500" class="t-mini">2원자로</text><text x="149" y="21.500" class="t-mini">3원자로</text>
              <g fill="none" stroke="#26292e" stroke-width="2"><circle cx="116" cy="32" r="8"/><circle cx="137" cy="32" r="8"/><circle cx="158" cy="32" r="8"/></g>
              <text x="116" y="33" class="t-ring">1100</text><text x="137" y="33" class="t-ring">1100</text><text x="158" y="33" class="t-ring">1100</text>
              <g fill="none" stroke="#ffb91e" stroke-width=".9"><rect x="107" y="45" width="18" height="5" rx="2"/><rect x="128" y="45" width="18" height="5" rx="2"/><rect x="149" y="45" width="18" height="5" rx="2"/><path d="M116 45v5M137 45v5M158 45v5M107 53h18v5h-18zM128 53h18v5h-18zM149 53h18v5h-18z"/></g>
              <path d="M172 23h6v10h-6z" fill="#ffb91e"/><path d="M172 35h6v10h-6zM172 47h6v10h-6z" fill="#c6c6c6"/>
              <path d="M178 23h41v10h-41zM178 35h41v10h-41zM178 47h41v10h-41z" fill="none" stroke="#34363a" stroke-width=".6"/>
              <text x="173" y="32" class="t-rank">1.</text><text x="173" y="44" class="t-rank">2.</text><text x="173" y="56" class="t-rank">3.</text>
              <path d="M181 26h17M181 28.500h19M181 31h17M181 38h17M181 40.500h19M181 43h17M181 50h17M181 52.500h19M181 55h17" stroke="#aaa" stroke-width=".8" stroke-dasharray="3 .7 2 1"/>
              <path d="M106 60h62M171 60h47" stroke="#5a4518" stroke-width=".8"/>
              <path d="M106 64.500h112M106 69.500h112" stroke="#a37715"/><path d="M106 65.600h112M106 68.600h112" stroke="#fff" stroke-width=".6"/>
              <text x="107" y="73.500" class="t-mini">원자로 · 원자로</text>
              <path d="M113 75h59v19h-10v8h-5v14h-36v-21h-8z" fill="#70828b"/>
              <path d="M117 79h50v9h-50zM132 83h26v12h-26z" fill="#879aa3" stroke="#566770" stroke-width=".6"/>
              <circle cx="130" cy="107" r="5" fill="none" stroke="#34505c" stroke-width="2.500"/><path d="M137 97h8v12h-8z" fill="#9fb0b8"/>
              <path d="M179 71.500h38v13h-38zM198 71.500v13" fill="none" stroke="#a0a1a3" stroke-width=".8"/>
              <path d="M179 87h38v31h-38z" fill="none" stroke="#fff"/><path d="M212 87h5v8h-5z" fill="#ddd"/>
              <path d="M3 81h101v19H3zM3 105h101v13.500H3zM36 105v13.500M70 105v13.500" fill="none" stroke="#8a8b8d" stroke-width=".8"/>
              <text x="4" y="79" class="t-mini">Lower</text><text x="4" y="104" class="t-mini">Water 수급도</text>
              <text x="16" y="117" class="t-mini">MIX 1</text><text x="49" y="117" class="t-mini">MIX 2</text><text x="83" y="117" class="t-mini">MIX 3</text>
            </svg>
          </div>
          <div class="page-tools">
            <button type="button" class="active" title="Thumbnails"><svg class="ico"><use href="#i-img"/></svg></button>
            <button type="button" title="Add page"><svg class="ico"><use href="#i-page"/></svg></button>
            <button type="button" title="Copy page"><svg class="ico"><use href="#i-pages"/></svg></button>
            <button type="button" title="Delete page"><svg class="ico"><use href="#i-del"/></svg></button>
          </div>
          <div class="tabs">
            <button type="button" class="current">Pa...</button>
            <button type="button">Ta...</button>
            <button type="button">Ob...</button>
            <button type="button">De...</button>
            <button type="button">Da...</button>
          </div>
        </aside>

        <!-- Editor -->
        <section class="editor">
          <div class="doc-tabs">
            <div class="doc-tab current">
              <button type="button" class="doc-name">Design</button>
              <button type="button" title="Preview"><svg class="ico"><use href="#i-eye"/></svg></button>
              <button type="button" title="Tags"><svg class="ico"><use href="#i-tag"/></svg></button>
            </div>
            <div class="doc-tab">
              <button type="button" class="doc-name"><svg class="ico"><use href="#i-script"/></svg> Script</button>
              <button type="button" title="Import"><svg class="ico"><use href="#i-import"/></svg></button>
              <button type="button" title="Export"><svg class="ico"><use href="#i-export"/></svg></button>
              <button type="button" title="Sidebar"><svg class="ico"><use href="#i-side"/></svg></button>
              <button type="button" title="Zoom in"><svg class="ico"><use href="#i-zin"/></svg></button>
              <button type="button" title="Zoom out"><svg class="ico"><use href="#i-zout"/></svg></button>
            </div>
            <div class="doc-nav">
              <button type="button" aria-label="Previous tab"><svg width="4" height="6"><path d="M4 0v6L0 3z" fill="#77788a"/></svg></button>
              <button type="button" aria-label="Next tab"><svg width="4" height="6"><path d="M0 0v6l4-3z" fill="#77788a"/></svg></button>
            </div>
          </div>

          <div class="viewport">
            <div class="canvas">
              <!-- active zone, scrolled mostly out of view -->
              <div class="zone-rule"></div>
              <div class="status-col">
                <div class="load">87</div>
                <div class="percent">%</div>
                <div class="state">EMERGENCY</div>
                <div class="clock">00:00:00</div>
                <button type="button" class="pill">SET UP</button>
                <button type="button" class="pill teal">RUN</button>
              </div>

              <section class="board temperature">
                <h3>TEMPERATURE SET</h3>
                <div class="reactors">
                  <div class="reactor">
                    <h4>1원자로</h4>
                    <svg class="ring selected" width="208" height="208">
                      <circle cx="104" cy="104" r="86.500" fill="none" stroke="#26292e" stroke-width="19"/>
                      <path d="M181 105h19" stroke="#ffb91e" stroke-width="1.500"/>
                      <text x="104" y="107" class="now">1100</text>
                      <text x="104" y="137" class="goal">1100</text>
                      <g fill="#0ff" stroke="#000"><rect x="4" y="4" width="8" height="8"/><rect x="100" y="4" width="8" height="8"/><rect x="196" y="4" width="8" height="8"/><rect x="4" y="100" width="8" height="8"/><rect x="196" y="100" width="8" height="8"/><rect x="4" y="196" width="8" height="8"/><rect x="100" y="196" width="8" height="8"/><rect x="196" y="196" width="8" height="8"/></g>
                    </svg>
                    <div class="range">
                      <svg width="190" height="60"><path d="M2 30L16 1h158l14 29-14 29H16zM95 1v58" fill="none" stroke="#ffb91e" stroke-width="2"/></svg>
                      <button type="button">HIGH</button><button type="button">LOW</button>
                    </div>
                    <button type="button" class="set">SET</button>
                  </div>
                  <div class="reactor">
                    <h4>2원자로</h4>
                    <svg class="ring" width="208" height="208">
                      <circle cx="104" cy="104" r="86.500" fill="none" stroke="#26292e" stroke-width="19"/>
                      <path d="M181 105h19" stroke="#ffb91e" stroke-width="1.500"/>
                      <text x="104" y="107" class="now">1100</text>
                      <text x="104" y="137" class="goal">1100</text>
                    </svg>
                    <div class="range">
                      <svg width="190" height="60"><path d="M2 30L16 1h158l14 29-14 29H16zM95 1v58" fill="none" stroke="#ffb91e" stroke-width="2"/></svg>
                      <button type="button">HIGH</button><button type="button">LOW</button>
                    </div>
                    <button type="button" class="set">SET</button>
                  </div>
                  <div class="reactor">
                    <h4>3원자로</h4>
                    <svg class="ring" width="208" height="208">
                      <circle cx="104" cy="104" r="86.500" fill="none" stroke="#26292e" stroke-width="19"/>
                      <path d="M181 105h19" stroke="#ffb91e" stroke-width="1.500"/>
                      <text x="104" y="107" class="now">1100</text>
                      <text x="104" y="137" class="goal">1100</text>
                    </svg>
                    <div class="range">
                      <svg width="190" height="60"><path d="M2 30L16 1h158l14 29-14 29H16zM95 1v58" fill="none" stroke="#ffb91e" stroke-width="2"/></svg>
                      <button type="button">HIGH</button><button type="button">LOW</button>
                    </div>
                    <button type="button" class="set">SET</button>
                  </div>
                </div>
              </section>

              <section class="board alarm">
                <h3>ALARM</h3>
                <div class="alarm-tabs"><span>현재</span><span class="dim">지난</span></div>
                <div class="alarm-card first">
                  <strong>1.</strong>
                  <ul><li>· 1원자로</li><li>· 1원자로</li><li>· 1원자로</li></ul>
                </div>
                <div class="alarm-card">
                  <strong>2.</strong>
                  <ul><li>· 2원자로</li><li>· 2원자로</li><li>· 2원자로</li></ul>
                </div>
                <div class="alarm-card">
                  <strong>3.</strong>
                  <ul><li>· 3원자로</li><li>· 3원자로</li><li>· 3원자로</li></ul>
                </div>
              </section>

              <div class="board overview"></div>
            </div>

            <div class="vscroll">
              <svg class="ico"><path d="M4.500 10L8 6.500l3.500 3.500" fill="none" stroke="#505050" stroke-width="1.800"/></svg>
              <div class="track"><div class="thumb-v"></div></div>
              <svg class="ico"><path d="M4.500 6.500L8 10l3.500-3.500" fill="none" stroke="#505050" stroke-width="1.800"/></svg>
            </div>
            <div class="hscroll">
              <svg class="ico"><path d="M10 4.500L6.500 8l3.500 3.500" fill="none" stroke="#505050" stroke-width="1.800"/></svg>
              <div class="track"><div class="thumb-h"></div></div>
              <svg class="ico"><path d="M6.500 4.500L10 8l-3.500 3.500" fill="none" stroke="#505050" stroke-width="1.800"/></svg>
            </div>
            <div class="corner"></div>
          </div>
        </section>

        <!-- Properties -->
        <aside class="panel properties">
          <div class="panel-head">
            <h2>Properties</h2>
            <button type="button" aria-label="Pin"><svg class="ico"><use href="#i-pin"/></svg></button>
            <button type="button" aria-label="Close"><svg class="ico"><use href="#i-x"/></svg></button>
          </div>
          <div class="prop-tools">
            <button type="button" class="active" title="Categorized"><svg class="ico"><use href="#i-cat"/></svg></button>
            <button type="button" title="Alphabetical"><svg class="ico"><use href="#i-az"/></svg></button>
            <i class="sep"></i>
            <button type="button" class="active" title="Properties"><svg class="ico"><use href="#i-wrench"/></svg></button>
            <button type="button" title="Events"><svg class="ico"><use href="#i-event"/></svg></button>
          </div>
          <div class="grid">
            <div class="rows">
              <table>
                <colgroup><col class="c-gutter"><col class="c-name"><col></colgroup>
                <tbody>
                  <tr><th colspan="3"><div>BlockArc<svg class="ico"><use href="#i-up"/></svg></div></th></tr>
                  <tr><td></td><td>End Angle</td><td>1</td></tr>
                  <tr class="picked"><td></td><td>End Angle Tag</td><td><div class="edit"><span>NUCLEAR1....</span><button type="button" aria-label="Browse tag">···</button></div></td></tr>
                  <tr><td></td><td>Radius</td><td>20</td></tr>
                  <tr><td></td><td>Radius Tag</td><td></td></tr>
                  <tr><td></td><td>Start Angle</td><td>0</td></tr>
                  <tr><td></td><td>Start Angle Tag</td><td></td></tr>
                </tbody>
                <tbody>
                  <tr><th colspan="3"><div>Drawing<svg class="ico"><use href="#i-up"/></svg></div></th></tr>
                  <tr><td></td><td>FillColor</td><td><i class="chip"></i>255, 187, ...</td></tr>
                  <tr><td></td><td>FillOpacity</td><td>1</td></tr>
                  <tr><td></td><td>LineCap</td><td>Round</td></tr>
                  <tr><td></td><td>LineJoin</td><td>Round</td></tr>
                  <tr><td></td><td>LineStyle</td><td>Solid</td></tr>
                  <tr><td></td><td>LineWidth</td><td>1</td></tr>
                  <tr><td></td><td>MiterLimit</td><td>10</td></tr>
                  <tr><td></td><td>StrokeColor</td><td><i class="chip"></i>255, 187, ...</td></tr>
                  <tr><td></td><td>StrokeOpacity</td><td>0</td></tr>
                </tbody>
                <tbody>
                  <tr><th colspan="3"><div>General<svg class="ico"><use href="#i-up"/></svg></div></th></tr>
                  <tr><td></td><td>Description</td><td></td></tr>
                  <tr><td></td><td>Name</td><td>blockarc_2</td></tr>
                  <tr><td></td><td>Tooltip</td><td></td></tr>
                </tbody>
                <tbody>
                  <tr><th colspan="3"><div>Layout<svg class="ico"><use href="#i-up"/></svg></div></th></tr>
                  <tr><td></td><td>Angle</td><td>0</td></tr>
                  <tr><td></td><td>Height</td><td>160</td></tr>
                  <tr><td></td><td>Width</td><td>160</td></tr>
                  <tr><td></td><td>X</td><td>930</td></tr>
                  <tr><td></td><td>Y</td><td>200</td></tr>
                </tbody>
                <tbody>
                  <tr><th colspan="3"><div>Security<svg class="ico"><use href="#i-up"/></svg></div></th></tr>
                </tbody>
              </table>
            </div>
            <div class="grid-scroll">
              <svg width="7" height="4"><path d="M0 4h7L3.500 0z" fill="#77788a"/></svg>
              <div class="grid-track"><div class="grid-thumb"></div></div>
              <svg width="7" height="4"><path d="M0 0h7L3.500 4z" fill="#77788a"/></svg>
            </div>
          </div>
          <div class="splitter"></div>
          <div class="hint">
            <h3>End Angle Tag</h3>
            <p>Assign Tag for End Angle</p>
          </div>
          <div class="tabs">
            <button type="button" class="current">Prop...</button>
            <button type="button">Sym...</button>
            <button type="button">History</button>
            <button type="button">Anim...</button>
          </div>
        </aside>
      </main>

      <footer class="statusbar">
        <span class="pos">Pos: 930 x 200, Size: 160 x 160, Angle: 0</span>
        <span class="cell cursor">1591 x 227</span>
        <label class="cell zoom-label" for="zoom">120%</label>
        <button type="button" class="round" aria-label="Zoom out"><svg width="15" height="15"><circle cx="7.500" cy="7.500" r="6.500" fill="#f2f2f5" stroke="#85868f"/><path d="M4 7.500h7" stroke="#66677a" stroke-width="2"/></svg></button>
        <input type="range" id="zoom" min="10" max="215" value="120">
        <button type="button" class="round" aria-label="Zoom in"><svg width="15" height="15"><circle cx="7.500" cy="7.500" r="6.500" fill="#f2f2f5" stroke="#85868f"/><path d="M4 7.500h7M7.500 4v7" stroke="#66677a" stroke-width="2"/></svg></button>
        <button type="button" class="round fit" title="Zoom to 100%"><svg class="ico"><use href="#i-zoom100"/></svg></button>
      </footer>
    </div>
  </div>
</body>
</html>
```

FILE: styles.css
```
* {
  box-sizing: border-box;
}

body {
  margin: 0;
  font-family: 'DejaVu Sans Condensed', 'Noto Sans CJK KR', sans-serif;
  font-size: 12px;
  color: #1e1e3c;
}

button {
  margin: 0;
  padding: 0;
  border: none;
  background: none;
  font: inherit;
  color: inherit;
}

h1, h2, h3, h4, p, ul {
  margin: 0;
  padding: 0;
  list-style: none;
}

a {
  color: inherit;
  text-decoration: none;
}

.sprite {
  position: absolute;
}

.ico {
  width: 16px;
  height: 16px;
  flex: none;
  display: block;
}

/* window frame */
.window {
  height: 100vh;
  display: flex;
  flex-direction: column;
  border: 1px solid #9695a5;
  background: #c8c8d0;
  padding: 0 3px 4px;
}

.titlebar {
  height: 25px;
  flex: none;
  display: flex;
  align-items: center;
  gap: 4px;
  margin: 0 -3px;
  padding: 0 5px 0 6px;
  background: linear-gradient(#f0f0f3, #dadadf 2px, #c7c8cf);
}

.titlebar h1 {
  flex: 1;
  font-size: 12px;
  font-weight: bold;
  color: #5c5c70;
  text-shadow: 0 1px 0 #eeeef2;
}

.win-buttons {
  display: flex;
  gap: 2px;
}

.win-buttons button {
  width: 29px;
  height: 15px;
  display: flex;
  align-items: center;
  justify-content: center;
  border: 1px solid #a3a4ae;
  border-radius: 3px;
  background: linear-gradient(#eeeef1, #d4d5db);
}

.client {
  flex: 1;
  min-height: 0;
  display: flex;
  flex-direction: column;
  border: 1px solid #a5a5b1;
  background: #eaebef;
}

.menubar {
  height: 22px;
  flex: none;
  display: flex;
  align-items: center;
  gap: 15px;
  padding-left: 8px;
}

.menubar u {
  text-underline-offset: 2px;
}

/* toolbars */
.toolbars {
  display: flex;
  flex-direction: column;
  gap: 2px;
  padding: 1px 2px 0;
}

.toolbar-row {
  display: flex;
  gap: 3px;
}

.toolbar-row.shapes {
  padding-left: 2px;
}

.toolbar {
  height: 29px;
  display: flex;
  align-items: center;
  border: 1px solid #fff;
  border-right-color: #b9bac4;
  border-bottom: 2px solid #b9bac4;
  border-radius: 2px;
  background: linear-gradient(#fff, #f1f2f6);
}

.toolbar::before {
  content: '';
  width: 6px;
  height: 16px;
  margin: 0 4px;
  background: repeating-linear-gradient(90deg, #d2d3da 0 1px, #f8f8fa 1px 2px);
}

.toolbar button,
.page-tools button,
.prop-tools button {
  width: 24px;
  height: 22px;
  display: flex;
  align-items: center;
  justify-content: center;
}

.toolbar .start {
  width: 54px;
  gap: 4px;
}

.toolbar .active,
.page-tools .active,
.prop-tools .active {
  background: linear-gradient(90deg, #b9bccb, #eceef4 20%, #e4e6ee 80%, #b9bccb);
}

.sep {
  width: 1px;
  height: 16px;
  margin: 0 3px;
  background: linear-gradient(#f4f4f7, #c4c5ce, #f4f4f7);
}

.sep.wide {
  margin: 0 4px;
}

.toolbar .letter {
  font-family: 'Liberation Serif', serif;
  font-size: 16px;
  font-weight: bold;
  color: #333;
}

.abl {
  height: 12px;
  padding: 0 1px;
  border: 1px solid #7a9cc4;
  background: #fff;
  color: #000;
  font: 9px/10px 'Liberation Sans', sans-serif;
}

.combo {
  position: relative;
  height: 20px;
  border: 1px solid #a9aab5;
  background: #fff;
}

.combo select {
  width: 100%;
  height: 100%;
  padding: 0 3px;
  border: none;
  background: none;
  appearance: none;
  font: inherit;
  color: inherit;
}

.combo::after {
  content: '';
  position: absolute;
  right: 5px;
  top: 7px;
  border: 3px solid transparent;
  border-top: 4px solid #1e1e3c;
  border-bottom: none;
}

.size-combo,
.swatch-combo {
  width: 50px;
}

.swatch-combo {
  margin: 0 1px;
}

.spaced {
  margin-left: 5px;
}

.line-combo {
  width: 70px;
  margin: 0 4px 0 6px;
}

.font-combo {
  width: 102px;
  margin-left: 3px;
}

.swatch {
  position: absolute;
  left: 5px;
  top: 4px;
  width: 22px;
  height: 10px;
  border: 1px solid #222;
  background: #ffbb22;
}

.stroke {
  position: absolute;
  left: 2px;
  top: 7px;
  width: 48px;
  height: 3px;
  background: #000;
}

/* work area */
.work {
  flex: 1;
  min-height: 0;
  display: flex;
  padding: 2px 2px 1px 3px;
}

.panel {
  flex: none;
  display: flex;
  flex-direction: column;
  width: 245px;
  margin-top: 2px;
  border: 1px solid #a0a1ae;
  background: #eaebef;
}

.panel-head {
  height: 19px;
  flex: none;
  display: flex;
  align-items: center;
  gap: 7px;
  padding: 0 4px 0 5px;
  background: #dcdde2;
}

.panel-head h2 {
  flex: 1;
  font-size: 12px;
  font-weight: bold;
  color: #5c5c70;
}

.panel-head.inactive {
  background: #e3e4e8;
}

.panel-head.inactive h2 {
  color: #9c9dab;
}

.search {
  height: 32px;
  flex: none;
  display: flex;
  align-items: center;
  gap: 9px;
  padding: 0 7px 0 5px;
}

.search input {
  flex: 1;
  min-width: 0;
  height: 20px;
  margin-right: -2px;
  border: 1px solid #a9aab5;
  background: #fff;
  font: inherit;
}

.pages {
  flex: 1;
  min-height: 0;
  padding: 2px 10px 2px 9px;
  background: #fafafa;
}

.page-name {
  display: block;
  height: 17px;
  padding-left: 3px;
  font-size: 13px;
  line-height: 18px;
}

.thumb {
  display: block;
  width: 100%;
  border: 2px solid #f00;
}

.thumb text {
  font-family: 'Noto Sans', 'Noto Sans CJK KR', sans-serif;
  fill: #ddd;
}

.thumb .t-title { font-size: 4px; font-weight: bold; text-anchor: middle; }
.thumb .t-mini { font-size: 3px; }
.thumb .t-head { font-size: 5px; }
.thumb .t-num { font-size: 10px; font-weight: bold; }
.thumb .t-clock { font-size: 5px; }
.thumb .t-ring { font-size: 4px; font-weight: bold; text-anchor: middle; }
.thumb .t-rank { font-size: 7px; font-weight: bold; fill: #000; }
.thumb .teal { fill: #1ba39c; }

.page-tools {
  height: 29px;
  flex: none;
  display: flex;
  align-items: center;
  padding-left: 2px;
  border-top: 1px solid #e0e0e4;
  border-bottom: 1px solid #b4b5c0;
  background: linear-gradient(#fff, #f1f2f6);
}

.tabs {
  height: 28px;
  flex: none;
  display: flex;
  margin: 2px 5px 1px 3px;
}

.tabs button {
  flex: 1;
  padding-bottom: 2px;
  border-top: 1px solid #c0c1ca;
  background: linear-gradient(#d8d9e0, #eaebef 60%);
}

.tabs .current {
  border-top-color: transparent;
  border-left: 1px solid #b9bac4;
  border-right: 1px solid #b9bac4;
  background: #eaebef;
}

/* editor */
.editor {
  flex: 1;
  min-width: 0;
  display: flex;
  flex-direction: column;
  margin: 0 6px 2px 2px;
}

.doc-tabs {
  height: 25px;
  flex: none;
  display: flex;
  align-items: flex-end;
  padding-left: 3px;
}

.doc-tab {
  height: 23px;
  display: flex;
  align-items: center;
  gap: 9px;
  padding: 0 8px;
  border: 1px solid #a9aab5;
  border-left: none;
  border-bottom: none;
  background: linear-gradient(#dadbe1, #e8e9ed);
  color: #4c4c64;
}

.doc-tab.current {
  height: 25px;
  border-left: 1px solid #a9aab5;
  background: #fff;
  color: #1e1e3c;
}

.doc-name {
  display: flex;
  align-items: center;
  gap: 2px;
}

.doc-nav {
  display: flex;
  gap: 16px;
  align-self: center;
  margin-left: auto;
  padding-right: 9px;
}

.doc-nav button {
  display: flex;
}

.viewport {
  flex: 1;
  min-height: 0;
  display: grid;
  grid-template: minmax(0, 1fr) 17px / minmax(0, 1fr) 17px;
  border: 1px solid #a0a1ae;
}

.vscroll,
.hscroll {
  display: flex;
  align-items: center;
  background: #f0f0f0;
}

.vscroll {
  flex-direction: column;
}

.corner {
  background: #f0f0f0;
}

.track {
  flex: 1;
}

.vscroll .track {
  width: 15px;
  padding-top: 37px;
}

.hscroll .track {
  height: 15px;
}

.thumb-v {
  height: 49%;
  background: #cdcdcd;
}

.thumb-h {
  width: 42%;
  height: 100%;
  margin-left: 41%;
  background: #cdcdcd;
}

/* drawing canvas, objects sit at their own coordinates */
.canvas {
  position: relative;
  overflow: hidden;
  background: linear-gradient(#111316 17px, #030506 18px, #0d1016 90px);
  font-family: 'Noto Sans', 'Noto Sans CJK KR', sans-serif;
  color: #fff;
}

.zone-rule {
  position: absolute;
  left: 0;
  top: 81px;
  width: 133px;
  height: 3px;
  border-bottom: 1px solid #808080;
  background: #fff;
}

.status-col {
  position: absolute;
  left: -120px;
  top: 234px;
  width: 220px;
  display: flex;
  flex-direction: column;
  align-items: flex-start;
  text-align: right;
}

.load {
  width: 136px;
  font-size: 58px;
  font-weight: bold;
  line-height: 80px;
}

.percent {
  width: 169px;
  margin-top: -4px;
  font-size: 40px;
  font-weight: 500;
  line-height: 20px;
}

.state {
  width: 189px;
  font-size: 28px;
  line-height: 56px;
  color: #1ba39c;
}

.clock {
  width: 214px;
  margin-top: 77px;
  padding-right: 2px;
  border-bottom: 2px solid #fff;
  font-size: 48px;
  line-height: 66px;
}

.pill {
  width: 218px;
  height: 48px;
  margin-top: 15px;
  padding: 0 50px 3px 0;
  border: 2px solid #858585;
  border-radius: 24px;
  font-size: 22px;
  font-weight: bold;
  text-align: right;
  color: #858585;
}

.pill.teal {
  margin-top: 7px;
  border-color: #1ba39c;
}

.board {
  position: absolute;
  top: 46px;
}

.board h3 {
  height: 64px;
  padding-left: 6px;
  border: solid #a37715;
  border-width: 4px 0;
  background:
    linear-gradient(#fff, #fff) 0 5px / 100% 2px no-repeat,
    linear-gradient(#fff, #fff) 0 49px / 100% 2px no-repeat;
  font-size: 30px;
  font-weight: 400;
  line-height: 56px;
  white-space: nowrap;
}

.temperature {
  left: 164px;
  width: 636px;
  height: 516px;
  border-bottom: 6px solid #5a4518;
}

.reactors {
  display: grid;
  grid-template-columns: repeat(3, 216px);
}

.reactor {
  display: flex;
  flex-direction: column;
  align-items: flex-start;
}

.reactor h4,
.alarm-tabs {
  height: 48px;
  font-size: 27px;
  font-weight: 300;
  line-height: 51px;
}

.reactor:nth-child(2) h4 {
  padding-left: 5px;
}

.reactor:nth-child(3) h4 {
  padding-left: 10px;
}

.ring {
  margin-left: -3px;
}

.ring text {
  text-anchor: middle;
  fill: #fff;
}

.ring .now {
  font-size: 40px;
  font-weight: bold;
}

.ring .goal {
  font-size: 24px;
  fill: #7c7d80;
}

.range {
  position: relative;
  display: grid;
  grid-template-columns: 1fr 1fr;
  width: 190px;
  height: 60px;
  margin: 27px 0 0 4px;
  font-size: 20px;
}

.range svg {
  position: absolute;
  left: 0;
  top: 0;
}

.range button {
  position: relative;
}

.range button:nth-of-type(1) {
  padding-left: 14px;
}

.range button:nth-of-type(2) {
  padding-right: 15px;
}

.set {
  width: 190px;
  height: 56px;
  margin: 19px 0 0 4px;
  border: 2px solid #ffb91e;
  font-size: 20px;
}

.alarm {
  left: 837px;
  width: 330px;
  height: 516px;
  border-bottom: 6px solid #5a4518;
}

.alarm-tabs {
  display: flex;
  gap: 19px;
  padding-left: 5px;
}

.alarm-tabs .dim {
  color: #77787b;
}

.alarm-card {
  display: flex;
  height: 115px;
  margin-bottom: 9px;
  border: 2px solid #808285;
  border-radius: 14px;
  overflow: hidden;
}

.alarm-tabs + .alarm-card {
  margin-top: 9px;
}

.alarm-card strong {
  width: 70px;
  flex: none;
  padding: 32px 4px 0 0;
  border-right: 2px solid #808285;
  background: #c6c6c6;
  color: #000;
  font-size: 64px;
  line-height: 90px;
  text-align: right;
}

.alarm-card.first strong {
  background: #ffb91e;
}

.alarm-card ul {
  padding: 10px 0 0 16px;
  font-size: 21px;
  font-weight: 300;
  line-height: 29px;
}

.alarm-card.first ul {
  padding-top: 7px;
}

.overview {
  left: 164px;
  top: 597px;
  width: 1000px;
  height: 10px;
  border-top: 4px solid #a37715;
  border-bottom: 2px solid #fff;
}

/* properties */
.properties {
  width: 243px;
}

.prop-tools {
  height: 33px;
  flex: none;
  display: flex;
  align-items: center;
  padding-left: 3px;
}

.grid {
  flex: 1;
  min-height: 0;
  display: flex;
  margin: 0 2px 0 1px;
  border: 1px solid #a0a1ae;
  background: #f2f3f6;
}

.rows {
  flex: 1;
  min-width: 0;
  overflow: hidden;
}

.rows table {
  width: 100%;
  table-layout: fixed;
  border-collapse: separate;
  border-spacing: 0;
}

.c-gutter {
  width: 17px;
}

.c-name {
  width: 93px;
}

.rows tr {
  height: 18px;
}

.rows tr:nth-child(odd) {
  height: 19px;
}

.rows tr:first-child {
  height: 17px;
}

.rows th {
  padding: 0 0 0 19px;
  border-bottom: 1px solid #d6d7df;
  background: #f0f1f4;
  font-weight: normal;
  line-height: 14px;
  text-align: left;
}

.rows th div {
  display: flex;
  justify-content: space-between;
  height: 16px;
  align-items: center;
}

.rows td {
  padding: 0 0 0 3px;
  border-bottom: 1px solid #d6d7df;
  border-right: 1px solid #d6d7df;
  background: #fff;
  font-weight: bold;
  line-height: 16px;
  white-space: nowrap;
  overflow: hidden;
}

.rows td:first-child {
  padding: 0;
  border-bottom: none;
  background: #f0f1f4;
}

.rows td:nth-child(2) {
  padding-left: 18px;
  background: #f8f8fb;
  font-weight: normal;
}

.rows .picked td:nth-child(2) {
  background: #dfe7fb;
}

.rows .picked td:last-child {
  padding: 0;
}

.edit {
  display: flex;
  justify-content: space-between;
  height: 18px;
  padding-left: 2px;
  border: 1px dotted #000;
}

.edit button {
  width: 16px;
  background: #dfe7fb;
  line-height: 12px;
}

.chip {
  display: inline-block;
  width: 23px;
  height: 10px;
  margin: 0 4px 0 2px;
  border: 1px solid #222;
  background: #ffbb22;
}

.grid-scroll {
  width: 18px;
  display: flex;
  flex-direction: column;
  align-items: center;
  padding: 6px 0;
}

.grid-track {
  flex: 1;
  width: 7px;
  padding-top: 7px;
}

.grid-thumb {
  height: 92%;
  border: 1px solid #b4b5c0;
  border-radius: 4px;
  background: linear-gradient(90deg, #f0f0f4, #d2d3dc);
}

.splitter {
  height: 6px;
  flex: none;
  width: 14px;
  margin: 0 auto;
  background: repeating-linear-gradient(90deg, #8c8d9a 0 1px, transparent 1px 2px) 0 2px / 100% 2px no-repeat;
}

.hint {
  height: 60px;
  flex: none;
  margin: 0 2px 0 1px;
  padding: 7px;
  border: 1px solid #c4c5ce;
  border-radius: 3px;
}

.hint h3 {
  font-size: 12px;
  line-height: 15px;
}

.hint p {
  margin-top: 7px;
  line-height: 15px;
}

.properties .tabs {
  margin-top: 0;
}

/* status bar */
.statusbar {
  height: 27px;
  flex: none;
  display: flex;
  align-items: center;
  padding: 0 8px 0 9px;
  border-top: 1px solid #b4b5c0;
  background: linear-gradient(#d6d7dc, #c6c7ce);
}

.pos {
  flex: 1;
}

.cell {
  height: 18px;
  padding-left: 9px;
  border-left: 1px solid #a5a6b2;
  line-height: 18px;
}

.cursor {
  width: 87px;
}

.zoom-label {
  width: 46px;
}

.round {
  display: flex;
}

#zoom {
  width: 153px;
  height: 18px;
  margin: 0 9px 0 7px;
  appearance: none;
  background: linear-gradient(90deg, transparent, #a58fc0 15% 50%, #a5a6b2 52% 80%, transparent) 0 9px / 100% 1px no-repeat;
}

#zoom::-webkit-slider-thumb {
  appearance: none;
  width: 12px;
  height: 17px;
  border: 1px solid #8c8d9a;
  border-radius: 1px 1px 6px 6px;
  background: linear-gradient(#fff, #cfdcf8);
}

.fit {
  margin-left: 8px;
}
```
